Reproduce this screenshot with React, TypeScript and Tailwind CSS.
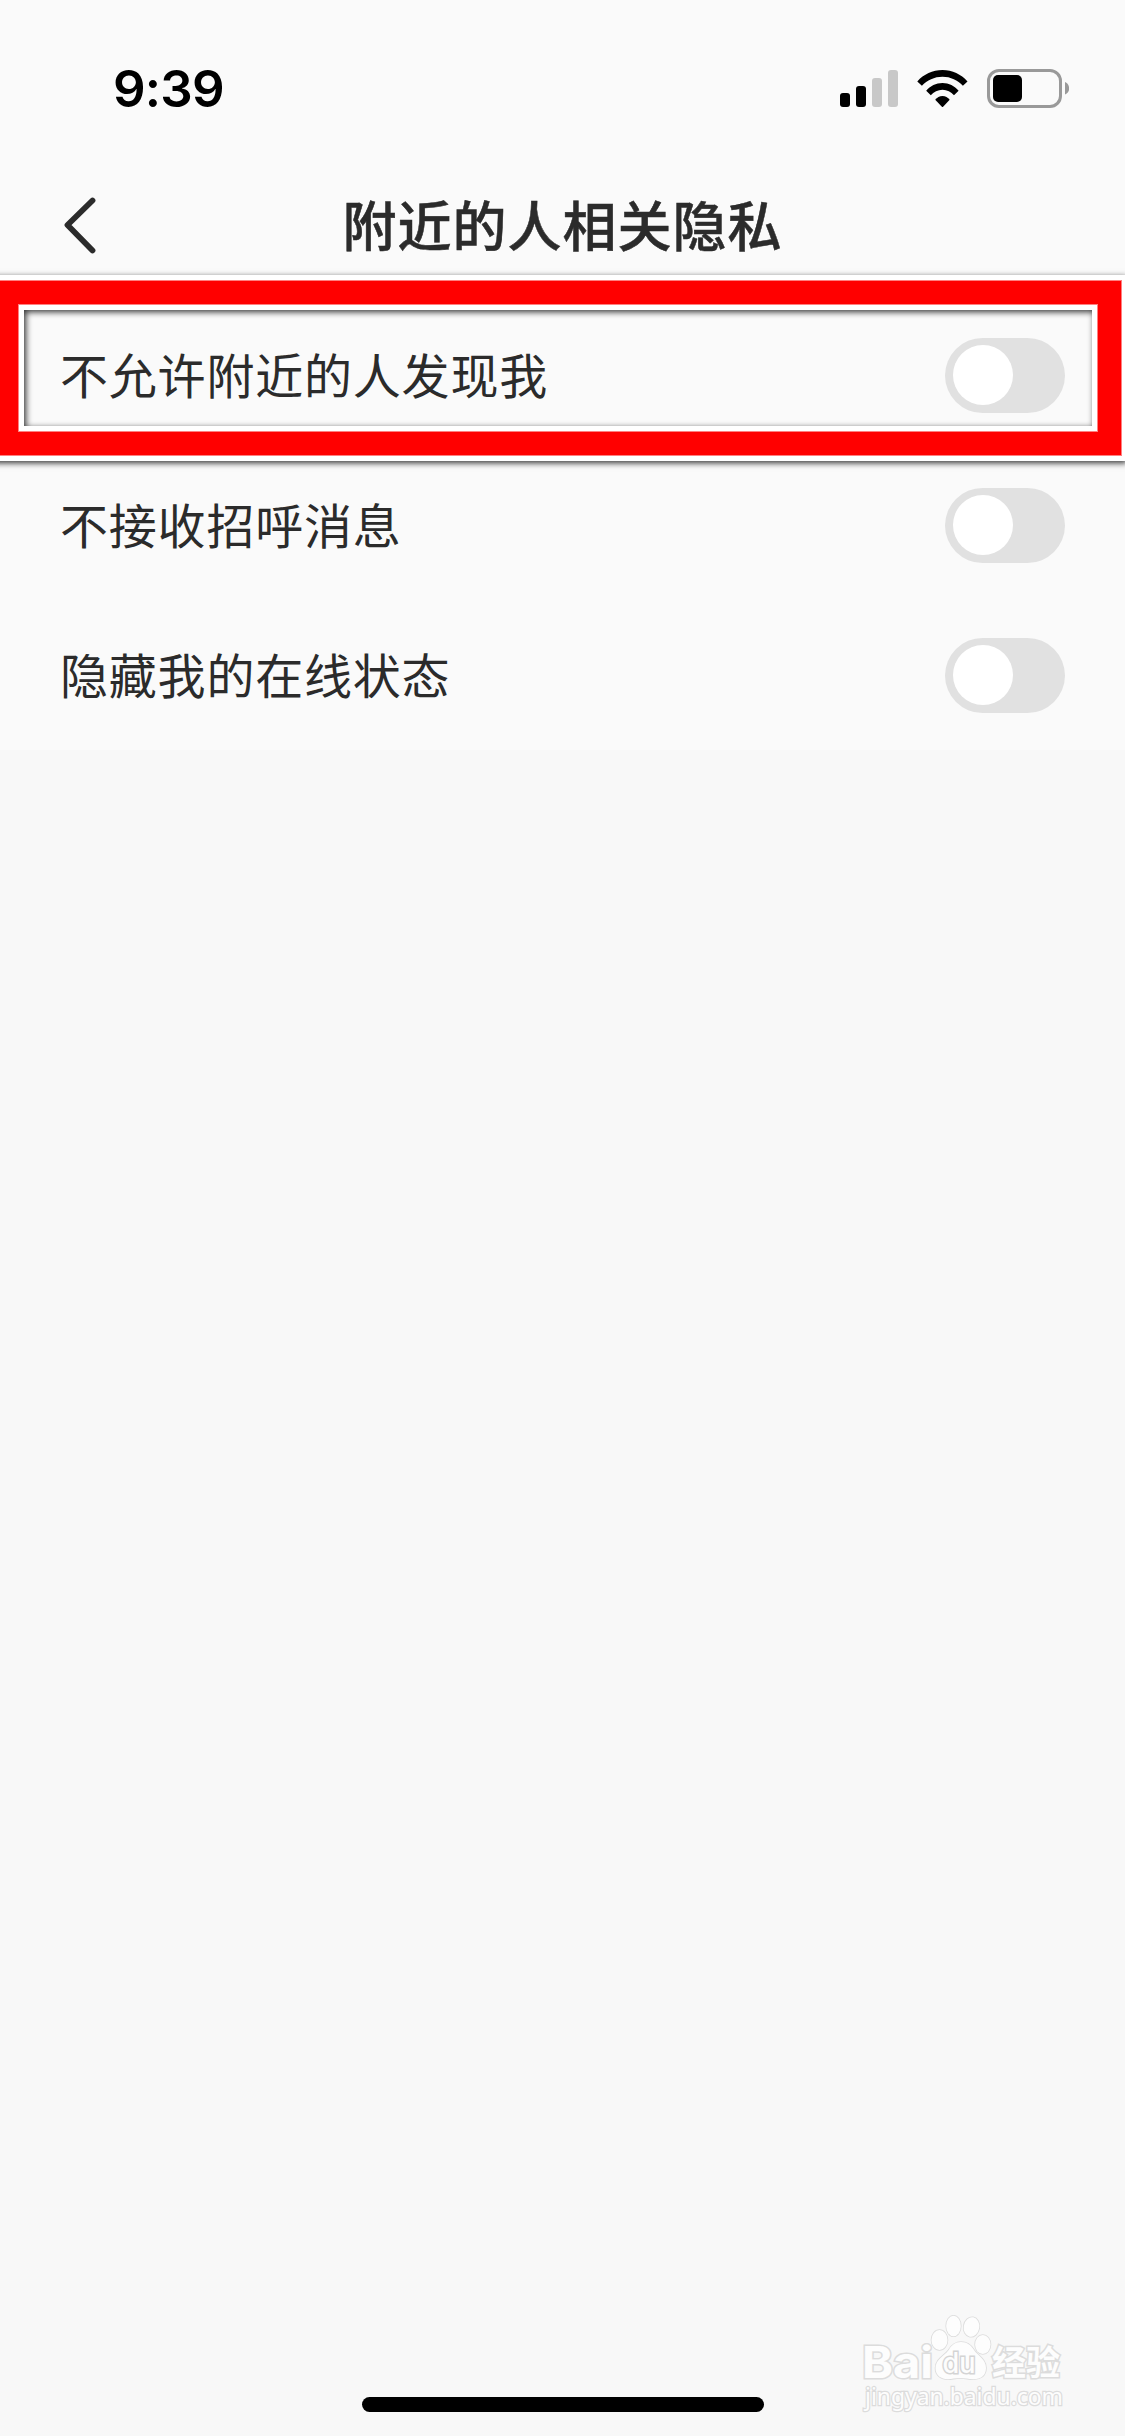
import { useState } from 'react';

const SETTINGS = [
  { id: 'discover', label: '不允许附近的人发现我' },
  { id: 'greeting', label: '不接收招呼消息' },
  { id: 'online', label: '隐藏我的在线状态' },
];

function SignalIcon() {
  return (
    <svg width="58" height="38" viewBox="0 0 58 38">
      <rect x="0" y="23" width="10" height="14" rx="3" fill="#000" />
      <rect x="16" y="16" width="10" height="21" rx="3" fill="#000" />
      <rect x="32" y="8" width="10" height="29" rx="3" fill="#c8c8c8" />
      <rect x="48" y="0" width="10" height="37" rx="3" fill="#c8c8c8" />
    </svg>
  );
}

function WifiIcon() {
  return (
    <svg width="51" height="38" viewBox="0 0 51 38">
      <path d="M.3 11.4C6.700 4.300 15.600 0 25.500 0s18.600 4.300 25 11.400l-4.600 4.400C40.700 10.100 33.600 6.700 25.500 6.700S10.100 10.100 4.900 15.800z" />
      <path d="M9.200 20.700C13.300 15.900 19 13 25.500 13s12 2.900 16.100 7.700l-4.600 4.500C34.100 21.900 30 19.800 25.500 19.800s-8.800 2.100-11.700 5.400z" />
      <path d="M18.200 29.800C20 27.400 22.600 26 25.500 26s5.400 1.400 7.200 3.800L26.100 36.800q-.6.6-1.200 0z" />
    </svg>
  );
}

function BatteryIcon() {
  return (
    <svg width="82" height="39" viewBox="0 0 82 39">
      <rect x="1.500" y="1.500" width="72" height="36" rx="10.500" fill="none" stroke="#999" strokeWidth="3" />
      <rect x="6" y="6" width="29" height="27" rx="5" fill="#000" />
      <path d="M78 13c2.500 1 4.200 3.600 4.200 6.300S80.500 24.500 78 25.500z" fill="#999" />
    </svg>
  );
}

function StatusBar() {
  return (
    <div className="flex h-[132px] items-start justify-between pl-[113px] pr-[56px]">
      <span className="mt-[59px] font-['Inter'] text-[51px] leading-[60px] font-semibold tracking-[-0.8px] text-black">
        9:39
      </span>
      <div className="mt-[69px] flex items-start">
        <div className="mt-px">
          <SignalIcon />
        </div>
        <div className="mt-px ml-[19px]">
          <WifiIcon />
        </div>
        <div className="ml-[19px]">
          <BatteryIcon />
        </div>
      </div>
    </div>
  );
}

function NavBar() {
  return (
    <div className="grid h-[168px] grid-cols-[200px_1fr_200px] items-start">
      <button className="mt-[64px] ml-[63px] w-[34px]" aria-label="返回">
        <svg width="34" height="58" viewBox="0 0 34 58" fill="none" stroke="#2b2b2b" strokeWidth="5.800" strokeLinecap="round" strokeLinejoin="round">
          <path d="M29.500 4.500L4.500 29l25 25.500" />
        </svg>
      </button>
      <h1 className="mt-[52px] text-center text-[54px] leading-[80px] font-medium tracking-[1px] whitespace-nowrap text-[#2b2b2b] [-webkit-text-stroke:0.5px_#2b2b2b]">
        附近的人相关隐私
      </h1>
    </div>
  );
}

function Toggle({ checked, onChange }: { checked: boolean; onChange: () => void }) {
  return (
    <button
      onClick={onChange}
      role="switch"
      aria-checked={checked}
      className={[
        'flex h-[75px] w-[120px] items-center rounded-full px-2 transition-colors',
        checked ? 'justify-end bg-green-500' : 'justify-start bg-[#e1e1e1]',
      ].join(' ')}
    >
      <span className="h-[60px] w-[60px] rounded-full bg-white" />
    </button>
  );
}

function Watermark() {
  return (
    <svg className="absolute top-[2300px] left-[850px]" width="240" height="130" viewBox="0 0 240 130">
      <g fill="#fdfdfd" stroke="#dcdcdc" strokeWidth="1.600" paintOrder="stroke">
        <text x="12" y="77.500" fontFamily="Inter" fontWeight="700" fontSize="44" textLength="71" lengthAdjust="spacingAndGlyphs" strokeWidth="3">Bai</text>
        <ellipse cx="89.500" cy="40" rx="8" ry="10" />
        <ellipse cx="103.500" cy="26" rx="7.300" ry="10.300" />
        <ellipse cx="121.500" cy="27" rx="7.800" ry="9.800" transform="rotate(10 121.500 27)" />
        <ellipse cx="132.800" cy="44.500" rx="7.700" ry="9.500" />
        <path d="M111 42c6 0 10 3 13 8 4 6 12 9 12 18 0 8-6 11.500-13 11.200-5-.3-8-1.200-13-1.200s-8 1.200-12 1.200c-7 0-12.500-4-12.500-11 0-9 8.500-12 13-18 3-5 6.500-8.200 12.500-8.200z" />
        <text x="92.500" y="73" fontFamily="Inter" fontWeight="500" fontSize="28" textLength="33" lengthAdjust="spacingAndGlyphs" strokeWidth="3" stroke="#d4d4d4">du</text>
        <text x="142" y="74.500" fontFamily="'Noto Sans CJK SC', sans-serif" fontWeight="700" fontSize="34" textLength="68" lengthAdjust="spacingAndGlyphs" strokeWidth="3">经验</text>
        <text x="15" y="104.500" fontFamily="'Noto Sans'" fontWeight="400" fontSize="23" textLength="198" lengthAdjust="spacingAndGlyphs" strokeWidth="2.500">jingyan.baidu.com</text>
      </g>
    </svg>
  );
}

export default function App() {
  const [enabled, setEnabled] = useState<Record<string, boolean>>({});

  const handleToggle = (id: string) => {
    setEnabled((prev) => ({ ...prev, [id]: !prev[id] }));
  };

  return (
    <div className="relative flex h-[2436px] w-[1125px] flex-col overflow-hidden bg-[#f8f8f8] font-['Noto_Sans_CJK_SC',sans-serif]">
      <div className="bg-[#fafafa]">
        <StatusBar />
        <NavBar />

        {/* Privacy switches */}
        {SETTINGS.map(({ id, label }) => (
          <div key={id} className="flex h-[150px] items-center justify-between px-[60px]">
            <span className="pb-[5px] text-[48px] leading-[72px] tracking-[0.8px] text-[#2b2b2b]">{label}</span>
            <Toggle checked={!!enabled[id]} onChange={() => handleToggle(id)} />
          </div>
        ))}
      </div>

      {/* Highlight around the first switch */}
      <div className="pointer-events-none absolute top-[281px] left-[-5px] h-[174px] w-[1126px] border-[23px] border-[#ff0000] shadow-[0_0_0_1px_#ff8080,0_0_0_6px_#fff,0_2px_6px_6px_rgba(0,0,0,0.8),inset_0_0_0_1px_#ff8080,inset_0_0_0_6px_#fff,inset_2px_2px_6px_6px_rgba(0,0,0,0.8)]" />

      <Watermark />

      {/* Home indicator */}
      <div className="mx-auto mt-auto mb-[24px] h-[15px] w-[402px] rounded-full bg-black" />
    </div>
  );
}
